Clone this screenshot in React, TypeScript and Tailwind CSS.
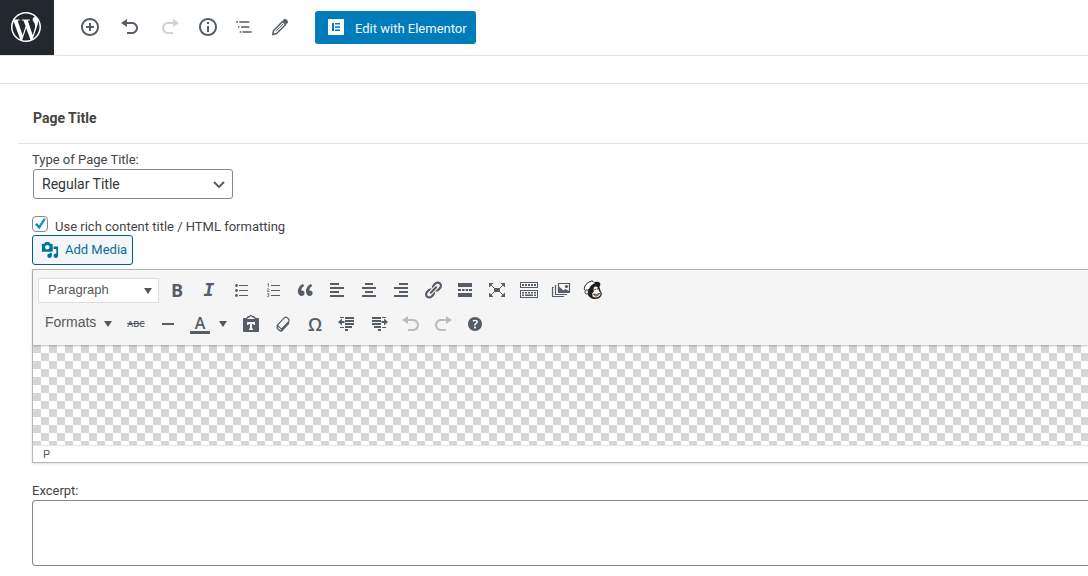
import React, { useState } from 'react';
import { SiWordpress } from 'react-icons/si';

type IconProps = { children: React.ReactNode; className?: string };

function Icon({ children, className = 'size-5' }: IconProps) {
  return (
    <svg viewBox="0 0 20 20" fill="currentColor" aria-hidden="true" className={`shrink-0 ${className}`}>
      {children}
    </svg>
  );
}

const UNDO = 'M12 5H7V2L1 6l6 4V7h5c2.2 0 4 1.8 4 4s-1.8 4-4 4H7v2h5c3.3 0 6-2.7 6-6s-2.7-6-6-6z';
const REDO = 'M8 5h5V2l6 4-6 4V7H8c-2.2 0-4 1.8-4 4s1.8 4 4 4h5v2H8c-3.3 0-6-2.7-6-6s2.7-6 6-6z';
const RING = 'M10 1c-5 0-9 4-9 9s4 9 9 9 9-4 9-9-4-9-9-9zm0 16c-3.9 0-7-3.1-7-7s3.1-7 7-7 7 3.1 7 7-3.1 7-7 7z';

function HeaderButton({ label, disabled, children }: { label: string; disabled?: boolean; children: React.ReactNode }) {
  return (
    <button
      type="button"
      aria-label={label}
      disabled={disabled}
      className="flex size-9 items-center justify-center text-[#555d66] disabled:text-[#cfd1d4]"
    >
      <Icon>{children}</Icon>
    </button>
  );
}

function Header() {
  return (
    <header className="flex h-14 items-start border-b border-[#e2e4e7]">
      <a href="#dashboard" aria-label="View Pages" className="flex h-full w-[54px] justify-center bg-[#23282e] pt-3 pr-0.5 text-white">
        <SiWordpress className="size-[30px]" />
      </a>
      <div className="flex flex-1 pt-[9px] pl-[18px]">
        <div className="flex gap-1">
          <HeaderButton label="Add block">
            <path d={RING} />
            <path d="M11 6H9v3H6v2h3v3h2v-3h3V9h-3z" />
          </HeaderButton>
          <HeaderButton label="Undo">
            <path d={UNDO} />
          </HeaderButton>
          <HeaderButton label="Redo" disabled>
            <path d={REDO} />
          </HeaderButton>
        </div>
        <div className="ml-0.5 flex">
          <HeaderButton label="Content structure">
            <path d={RING} />
            <path d="M9 9h2v6H9zM9 5h2v2H9z" />
          </HeaderButton>
          <HeaderButton label="Block navigation">
            <path d="M2.3 4.2H4v1.6H2.3zM5.3 4.2h10v1.6h-10zM4 9.2h1.4v1.6H4zM7 9.2h8.3v1.6H7zM5.7 14.2h1.6v1.6H5.7zM8.4 14.2h9.3v1.6H8.4z" />
          </HeaderButton>
          <HeaderButton label="Edit">
            <path d="M12.6 4.4l3 3L6.600 16.600l-3.900.9.900-3.900z" fill="none" stroke="currentColor" strokeWidth="1.500" strokeLinejoin="round" />
            <path d="M13 7L5.800 14.200" stroke="currentColor" strokeWidth=".9" />
            <path d="M12.800 3.600l1.400-1.400q.9-.8 1.800 0l1.800 1.800q.8.9 0 1.800l-1.400 1.400z" />
          </HeaderButton>
        </div>
        <button type="button" className="mt-0.5 ml-[17px] flex h-[33px] w-[161px] items-start gap-[11px] rounded-[3px] bg-[#007cba] pt-2 pl-[13px] text-[13px] text-[#f0f8fc]">
          <svg viewBox="0 0 16 16" className="size-4 shrink-0" aria-hidden="true">
            <path d="M0 0h16v16H0z" fill="#fff" />
            <path d="M4 4h2v8H4zM7 4h5v1.600H7zM7 7.200h5v1.600H7zM7 10.400h5V12H7z" fill="#007cba" />
          </svg>
          <span className="leading-[19px] whitespace-nowrap">Edit with Elementor</span>
        </button>
      </div>
    </header>
  );
}

function ToolButton({ label, disabled, children }: { label: string; disabled?: boolean; children: React.ReactNode }) {
  return (
    <button
      type="button"
      aria-label={label}
      disabled={disabled}
      className="flex h-[30px] w-8 shrink-0 items-center justify-center text-[#555d66] disabled:text-[#b9bcc0]"
    >
      {children}
    </button>
  );
}

function Caret() {
  return (
    <svg viewBox="0 0 8 6" className="h-1.5 w-2 shrink-0" fill="#50575e" aria-hidden="true">
      <path d="M0 0h8L4 6z" />
    </svg>
  );
}

function FormatRow() {
  return (
    <div className="flex h-[34px] items-center">
      <div className="relative mr-0.5 h-[25px] w-[121px] shrink-0">
        <select
          aria-label="Paragraph style"
          className="h-full w-full appearance-none border border-[#ddd] bg-white pl-[9px] font-['Liberation_Sans',Arial,sans-serif] text-[13px] text-[#595959]"
        >
          <option>Paragraph</option>
          <option>Heading 1</option>
          <option>Heading 2</option>
          <option>Preformatted</option>
        </select>
        <span className="pointer-events-none absolute inset-y-0 right-[7px] flex items-center pt-0.5">
          <Caret />
        </span>
      </div>
      <ToolButton label="Bold">
        <span className="font-['Open_Sans',sans-serif] text-[18px] leading-5 font-bold">B</span>
      </ToolButton>
      <ToolButton label="Italic">
        <span className="font-['DejaVu_Sans_Mono',monospace] text-[18px] leading-5 font-bold italic">I</span>
      </ToolButton>
      <ToolButton label="Bulleted list">
        <Icon>
          <circle cx="5.5" cy="5.5" r="1.4" />
          <circle cx="5.5" cy="10.5" r="1.4" />
          <circle cx="5.5" cy="15.5" r="1.4" />
          <path d="M8 5h9v1H8zM8 10h9v1H8zM8 15h9v1H8z" />
        </Icon>
      </ToolButton>
      <ToolButton label="Numbered list">
        <Icon>
          <path d="M8 5h9v1H8zM8 10h9v1H8zM8 15h9v1H8z" />
          <path
            d="M4.4 4.2l1-.7v3.3M4.2 9q1.8-.8 1.8.3 0 .7-1.8 2.1H6.4M4.2 13.7h1.9l-1 1.2q1.2.1 1.1 1.1-.3 1-2 .7"
            fill="none"
            stroke="currentColor"
            strokeWidth=".8"
          />
        </Icon>
      </ToolButton>
      <ToolButton label="Blockquote">
        <Icon>
          <path d="M9.49 13.22c0-.74-.2-1.38-.61-1.9-.62-.78-1.83-.88-2.53-.72-.29-1.65 1.11-3.75 2.92-4.65L7.88 4c-2.73 1.3-5.42 4.28-4.96 8.05C3.21 14.43 4.59 16 6.54 16c.85 0 1.56-.25 2.12-.75s.83-1.18.83-2.03zm8.05 0c0-.74-.2-1.38-.61-1.9-.63-.78-1.83-.88-2.53-.72-.29-1.65 1.11-3.75 2.92-4.65L15.93 4c-2.73 1.3-5.41 4.28-4.95 8.05.29 2.38 1.66 3.95 3.61 3.95.85 0 1.56-.25 2.12-.75s.83-1.18.83-2.03z" />
        </Icon>
      </ToolButton>
      <ToolButton label="Align left">
        <Icon>
          <path d="M12 5V3H3v2h9zm5 4V7H3v2h14zm-5 4v-2H3v2h9zm5 4v-2H3v2h14z" />
        </Icon>
      </ToolButton>
      <ToolButton label="Align center">
        <Icon>
          <path d="M14 5V3H6v2h8zm3 4V7H3v2h14zm-3 4v-2H6v2h8zm3 4v-2H3v2h14z" />
        </Icon>
      </ToolButton>
      <ToolButton label="Align right">
        <Icon>
          <path d="M17 5V3H8v2h9zm0 4V7H3v2h14zm0 4v-2H8v2h9zm0 4v-2H3v2h14z" />
        </Icon>
      </ToolButton>
      <ToolButton label="Insert link">
        <Icon>
          <path d="M17.74 2.76c1.68 1.69 1.68 4.41 0 6.1l-1.53 1.52c-1.12 1.12-2.7 1.47-4.14 1.09l2.62-2.61.76-.77.76-.76c.84-.84.84-2.2 0-3.04-.84-.85-2.2-.85-3.04 0l-.77.76-3.38 3.38c-.37-1.44-.02-3.02 1.1-4.14l1.52-1.53c1.69-1.68 4.42-1.68 6.1 0zM8.59 13.43l5.34-5.34c.42-.42.42-1.1 0-1.52-.44-.43-1.13-.39-1.53 0l-5.33 5.34c-.42.42-.42 1.1 0 1.52.44.43 1.13.39 1.52 0zm-.76 2.29l4.14-4.15c.38 1.44.03 3.02-1.09 4.14l-1.52 1.53c-1.69 1.68-4.41 1.68-6.1 0-1.68-1.68-1.68-4.42 0-6.1l1.53-1.52c1.12-1.12 2.7-1.47 4.14-1.1l-4.14 4.15c-.85.84-.85 2.2 0 3.05.84.84 2.2.84 3.04 0z" />
        </Icon>
      </ToolButton>
      <ToolButton label="Insert Read More tag">
        <Icon>
          <path d="M3 3h14v4H3zM3 13h14v4H3zM3 9h3v2H3zM7 9h2.6v2H7zM10.6 9h2.6v2h-2.6zM14 9h3v2h-3z" />
        </Icon>
      </ToolButton>
      <ToolButton label="Fullscreen">
        <Icon>
          <path d="M7 8h6v4H7zM2 3h4.500L2 7.500zM18 3v4.500L13.500 3zM2 17v-4.500L6.500 17zM18 17h-4.500l4.500-4.500z" />
          <path d="M3.500 4.500L8 9M16.500 4.500L12 9M3.500 15.500L8 11M16.500 15.500L12 11" stroke="currentColor" strokeWidth="1" />
        </Icon>
      </ToolButton>
      <ToolButton label="Toolbar toggle">
        <Icon>
          <path fillRule="evenodd" d="M1 2h18v6H1zM2 3v4h16V3zM1 10h18v8H1zM2 11v6h16v-6z" />
          <path d="M3 4h2v2H3zM6 4h2v2H6zM9 4h2v2H9zM12 4h2v2h-2zM15 4h2v2h-2zM3 12h2v1.500H3zM6 12h2v1.500H6zM9 12h2v1.500H9zM12 12h2v1.500h-2zM15 12h2v1.500h-2zM3 14.500h2V16H3zM6 14.500h8V16H6zM15 14.500h2V16h-2z" />
        </Icon>
      </ToolButton>
      <ToolButton label="Add gallery">
        <Icon>
          <path d="M7.500 3.500h11v9h-11zM5.500 5.500h-1v9h11v-.500M2.800 7.500H1.500v9h11v-.500" fill="none" stroke="currentColor" strokeWidth="1.200" />
          <circle cx="15.500" cy="6.500" r="1.600" />
          <path d="M8 12V6.500l4.500 4 1.800-1.500L18 11v1z" />
        </Icon>
      </ToolButton>
      <ToolButton label="Mailchimp form">
        <Icon>
          <path d="M5 9Q7 3.500 13 1.800q4.300-.6 4.400 3l-1 2 1.400 4.600q1.600 1 .8 3.800Q16 19.500 11 19q-4.500-.5-6.300-4.800z" fill="#231d19" />
          <path d="M1.800 10Q.7 8.600 2 6q2-4 6.500-5 2-.1 1.700.9" fill="#fff" stroke="#231d19" strokeWidth="1" />
          <path d="M3 8.500q2-4.700 6.600-6L12 3Q7.500 5 5.800 9.300z" fill="#fff" />
          <path d="M10.500 7.800q1.600-2 4-.8l1.600 4.200 1.300 1.400q.7 2.200-1.200 3.700-3.500 2.400-6.600.3l-.4-3 1.600-2z" fill="#f6f2ee" />
          <path d="M2.300 10.500q1.700-1.600 3 .2.700 2.600-.8 3.400-2.300.2-2.600-1.700z" fill="#eee8e2" stroke="#231d19" strokeWidth=".8" />
          <path d="M10.600 14q2.800 1.300 6-.6-1.300 3-4.400 2.700zM11.300 9.800q1-.9 1.900 0M14.300 8.200l.3 1.400" fill="none" stroke="#231d19" strokeWidth=".8" />
        </Icon>
      </ToolButton>
    </div>
  );
}

function AdvancedRow() {
  return (
    <div className="flex h-[34px] items-center">
      <button
        type="button"
        className="flex h-[30px] w-[82px] shrink-0 items-center gap-2 pb-1 pl-[7px] font-['Liberation_Sans',Arial,sans-serif] text-[14px] text-[#595959]"
      >
        Formats
        <span className="pt-1">
          <Caret />
        </span>
      </button>
      <ToolButton label="Strikethrough">
        <span className="font-['Open_Sans',sans-serif] text-[9px] leading-5 font-semibold line-through">ABC</span>
      </ToolButton>
      <ToolButton label="Horizontal line">
        <Icon>
          <path d="M4 9h12v2H4z" />
        </Icon>
      </ToolButton>
      <ToolButton label="Text color">
        <span className="h-5 w-5 border-b-3 border-[#555d66] text-center font-['Open_Sans',sans-serif] text-[16px] leading-[18px] font-semibold">A</span>
      </ToolButton>
      <button type="button" aria-label="Choose text color" className="mr-[5px] flex h-[30px] w-3.5 items-center justify-center">
        <Caret />
      </button>
      <ToolButton label="Paste as text">
        <Icon>
          <path fillRule="evenodd" d="M3 4h2l2-2h1.500l.5-1h2l.5 1H13l2 2h2q1 0 1 1v12q0 1-1 1H3q-1 0-1-1V5q0-1 1-1zM6 8v3h1.500V10H9v4.500H8V16h4v-1.500h-1V10h1.500v1H14V8zM6 5h8l-1.500-1.500H11v-1H9v1H7.500z" />
        </Icon>
      </ToolButton>
      <ToolButton label="Clear formatting">
        <Icon>
          <path d="M4.200 11.300l7.200-7.600q1.400-1 2.700 0l1.500 1.300q1 1.200 0 2.600l-7.200 7.700z" fill="#f5f5f5" stroke="currentColor" strokeWidth="1.200" />
          <path d="M3.800 10.800l4.600 4L16.200 7v2.800L9.300 17.300q-1.400 1.100-2.800 0L4.200 15.200q-1.200-1.200-.6-2.700z" />
          <path d="M4.900 12.800l2.900 2.500v1.300L4.900 14.200z" fill="#f5f5f5" />
        </Icon>
      </ToolButton>
      <ToolButton label="Special character">
        <span className="font-['Open_Sans',sans-serif] text-[18px] leading-5 font-semibold">Ω</span>
      </ToolButton>
      <ToolButton label="Decrease indent">
        <Icon>
          <path d="M8 3h9v2H8zM8 6h9v2H8zM8 9h9v2H8zM8 12h7v2H8zM8 15h3v2H8zM3 3h4v1H3zM3 13h4v1H3zM1 8l4-3.500V7h2.500v2H5v2.500z" />
        </Icon>
      </ToolButton>
      <ToolButton label="Increase indent">
        <Icon>
          <path d="M3 3h9v2H3zM3 6h9v2H3zM3 9h9v2H3zM5 12h7v2H5zM9 15h3v2H9zM13 3h4v1h-4zM13 13h4v1h-4zM19 8l-4-3.500V7h-2.500v2H15v2.500z" />
        </Icon>
      </ToolButton>
      <ToolButton label="Undo edit" disabled>
        <Icon>
          <path d={UNDO} />
        </Icon>
      </ToolButton>
      <ToolButton label="Redo edit" disabled>
        <Icon>
          <path d={REDO} />
        </Icon>
      </ToolButton>
      <ToolButton label="Keyboard shortcuts">
        <Icon>
          <path d="M17 10c0-3.870-3.140-7-7-7-3.870 0-7 3.130-7 7s3.130 7 7 7c3.860 0 7-3.130 7-7zm-6.300 1.480H9.140v-.43c0-.38.08-.7.24-.98s.46-.57.88-.89c.41-.29.68-.53.81-.71.14-.18.2-.39.2-.62 0-.25-.09-.44-.28-.58-.19-.13-.45-.19-.79-.19-.58 0-1.250.19-2 .57l-.64-1.280c.87-.49 1.800-.74 2.770-.74.81 0 1.450.2 1.920.58.48.39.71.91.71 1.550 0 .43-.09.8-.29 1.110-.19.32-.57.67-1.110 1.060-.38.28-.61.49-.71.63-.1.15-.15.34-.15.57v.35zm-1.470 2.740c-.18-.17-.27-.42-.27-.73 0-.33.08-.58.26-.75s.43-.25.77-.25c.32 0 .57.09.75.26s.27.42.27.74c0 .3-.09.55-.27.72-.18.18-.43.27-.75.27-.33 0-.58-.09-.76-.26z" />
        </Icon>
      </ToolButton>
    </div>
  );
}

function RichEditor() {
  return (
    <div className="mt-1 border border-r-0 border-[#b5b7ba] shadow-sm">
      <div className="relative bg-[#f5f5f5] pt-[3px] pb-1 pl-[5px] shadow-[0_1px_2px_rgba(0,0,0,0.25)]">
        <FormatRow />
        <AdvancedRow />
      </div>
      <div
        role="textbox"
        aria-label="Title content"
        contentEditable
        suppressContentEditableWarning
        className="h-[100px] bg-[repeating-conic-gradient(#fff_0_25%,#d6d6d6_0_50%)] bg-[length:16px_16px] outline-none"
      />
      <div className="h-[17px] border-t border-[#e5e5e5] bg-white pl-2.5 text-[11px] leading-[17px] text-[#555]">P</div>
    </div>
  );
}

export default function App() {
  const [rich, setRich] = useState(true);

  return (
    <div className="min-h-screen overflow-hidden bg-white font-[Roboto,sans-serif] text-[13px] text-[#444]">
      <Header />
      <main className="mt-[27px] border-t border-[#e2e4e7]">
        <section className="ml-[18px]">
          <h2 className="border-b border-[#e2e4e7] pt-[25px] pb-[15px] pl-[15px] text-[14px] leading-[19px] font-bold text-[#444]">Page Title</h2>
          <div className="pt-[7px] pl-3.5">
            <label htmlFor="title-type" className="block pb-px leading-[17px]">
              Type of Page Title:
            </label>
            <div className="relative ml-px h-[30px] w-[200px]">
              <select
                id="title-type"
                className="h-full w-full appearance-none rounded-[3px] border border-[#7e8993] bg-white pl-2 text-[14px] text-[#32373c]"
              >
                <option>Regular Title</option>
                <option>Custom Title</option>
                <option>No Title</option>
              </select>
              <svg viewBox="0 0 12 8" className="pointer-events-none absolute top-3 right-2 h-2 w-3" fill="none" stroke="#555" strokeWidth="1.800" aria-hidden="true">
                <path d="M1 1l5 5 5-5" />
              </svg>
            </div>

            <label className="mt-[17px] flex h-[19px] items-start gap-[7px]">
              <span className="relative block size-4">
                <input
                  type="checkbox"
                  checked={rich}
                  onChange={(e) => setRich(e.target.checked)}
                  className="block size-4 appearance-none rounded border border-[#7e8993] bg-white"
                />
                {rich && (
                  <svg viewBox="0 0 16 16" className="pointer-events-none absolute inset-0 size-4" fill="#1e8cbe" aria-hidden="true">
                    <path d="M11.800 2.300l2 1-6.400 10L2.800 8.600l2-1.700 2.300 2.400z" />
                  </svg>
                )}
              </span>
              <span className="pt-0.5 leading-[17px]">Use rich content title / HTML formatting</span>
            </label>

            <button
              type="button"
              className="flex h-[30px] w-[101px] items-center gap-1.5 rounded-[3px] border border-[#016087] bg-[#f3f5f6] pl-2 whitespace-nowrap text-[#0071a1]"
            >
              <Icon className="size-[18px]">
                <path d="M13 11V4c0-.55-.45-1-1-1h-1.670L9 1H5L3.670 3H2c-.55 0-1 .45-1 1v7c0 .55.45 1 1 1h10c.55 0 1-.45 1-1zM7 4.500c1.380 0 2.500 1.120 2.500 2.500S8.380 9.500 7 9.500 4.500 8.380 4.500 7 5.620 4.500 7 4.500zM14 6h5v10.500c0 1.380-1.120 2.500-2.500 2.500S14 17.880 14 16.500s1.120-2.500 2.500-2.500c.17 0 .34.02.5.05V9h-3V6zm-4 8.050V13h2v3.500c0 1.380-1.120 2.500-2.500 2.500S7 17.880 7 16.500 8.120 14 9.500 14c.17 0 .34.02.5.05z" />
              </Icon>
              Add Media
            </button>

            <RichEditor />

            <label htmlFor="excerpt" className="mt-[19px] block pb-px leading-[17px]">
              Excerpt:
            </label>
            <textarea
              id="excerpt"
              className="block h-[66px] w-full resize-none rounded-l border border-r-0 border-[#7e8993] bg-white p-2"
            />
          </div>
        </section>
      </main>
    </div>
  );
}
